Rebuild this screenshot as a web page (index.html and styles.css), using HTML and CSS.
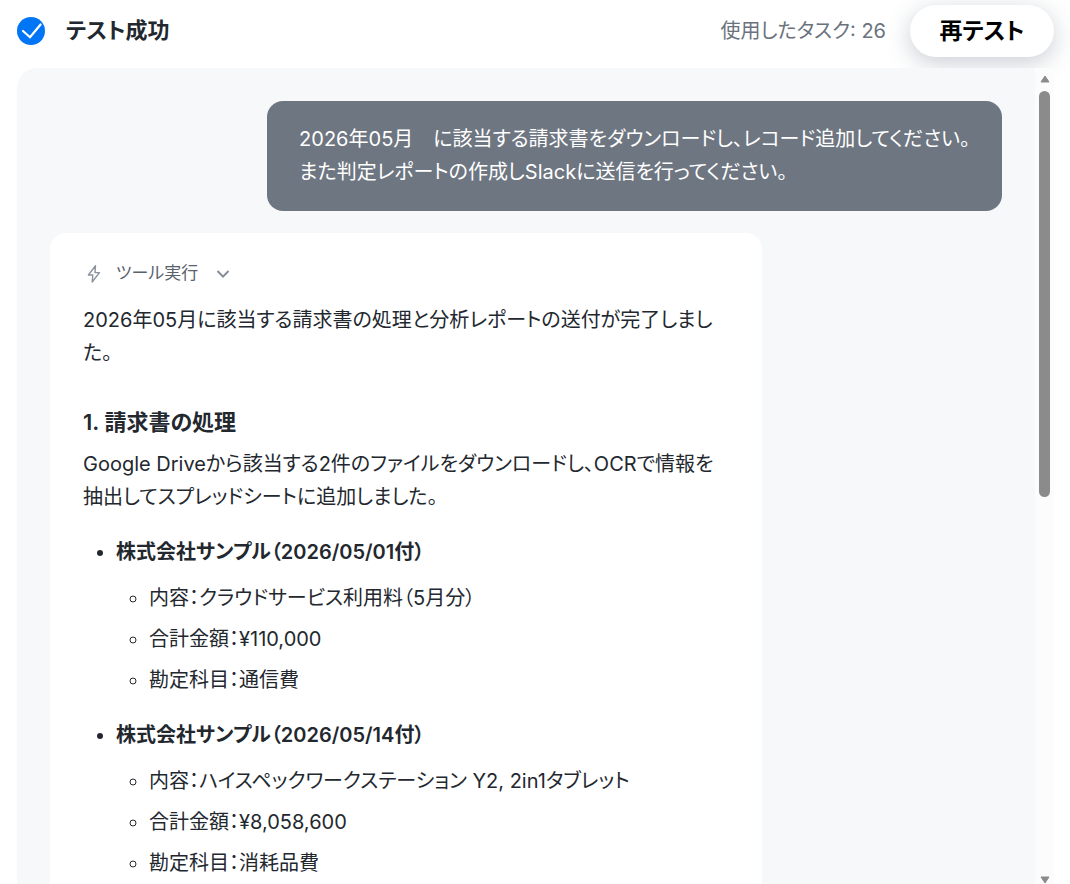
FILE: index.html
```html
<!DOCTYPE html>
<html lang="ja">
<head>
<meta charset="utf-8">
<meta name="viewport" content="width=device-width, initial-scale=1">
<title>テスト成功</title>
<link rel="stylesheet" href="styles.css">
</head>
<body>
<header class="topbar">
  <svg class="status-icon" viewBox="0 0 28 28" aria-hidden="true">
    <circle cx="14" cy="14" r="14" fill="#0075f6"/>
    <path d="M6 14l7 6.2L23.6 7.5" fill="none" stroke="#fff" stroke-width="2.2" stroke-linecap="round"/>
  </svg>
  <h1 class="title">テスト成功</h1>
  <p class="usage">使用したタスク: 26</p>
  <button class="retest" type="button">再テスト</button>
</header>
<main class="panel">
  <div class="thread">
    <div class="message">2026年05月　に該当する請求書をダウンロードし、レコード追加してください。<br>また判定レポートの作成しSlackに送信を行ってください。</div>
    <article class="reply">
      <button class="tool" type="button" aria-expanded="false">
        <svg class="bolt" viewBox="0 0 16 20" aria-hidden="true"><path d="M9.5 1.8L2.4 11h4.4L6.2 18l7.2-9.4H9z" fill="none" stroke="#8b929c" stroke-width="1.4" stroke-linejoin="round"/></svg>
        <span>ツール実行</span>
        <svg class="chevron" viewBox="0 0 14 10" aria-hidden="true"><path d="M1.5 2L7 7.6 12.5 2" fill="none" stroke="#858d98" stroke-width="2"/></svg>
      </button>
      <p class="text">2026年05月に該当する請求書の処理と分析レポートの送付が完了しました。</p>
      <h2 class="heading">1. 請求書の処理</h2>
      <p class="text">Google Driveから該当する2件のファイルをダウンロードし、OCRで情報を抽出してスプレッドシートに追加しました。</p>
      <ul class="invoices">
        <li><strong>株式会社サンプル（2026/05/01付）</strong>
          <ul class="details">
            <li>内容：クラウドサービス利用料（5月分）</li>
            <li>合計金額：¥110,000</li>
            <li>勘定科目：通信費</li>
          </ul>
        </li>
        <li><strong>株式会社サンプル（2026/05/14付）</strong>
          <ul class="details">
            <li>内容：ハイスペックワークステーション Y2, 2in1タブレット</li>
            <li>合計金額：¥8,058,600</li>
            <li>勘定科目：消耗品費</li>
          </ul>
        </li>
      </ul>
    </article>
  </div>
  <div class="scrollbar" aria-hidden="true">
    <svg class="arrow" viewBox="0 0 10 8"><path d="M5 1L9 7H1z" fill="#8b8b8b" stroke="#8b8b8b" stroke-linejoin="round"/></svg>
    <div class="track"><div class="thumb"></div></div>
    <svg class="arrow" viewBox="0 0 10 8"><path d="M5 7L1 1H9z" fill="#8b8b8b" stroke="#8b8b8b" stroke-linejoin="round"/></svg>
  </div>
</main>
</body>
</html>
```
FILE: styles.css
```css
* {
  box-sizing: border-box;
}

body {
  display: flex;
  flex-direction: column;
  height: 100vh;
  margin: 0;
  overflow: hidden;
  background: #fff;
  color: #23282f;
  font-family: Inter, "Noto Sans CJK JP", sans-serif;
  font-feature-settings: "palt";
  font-size: 20px;
  line-height: 33px;
}

h1, h2, p, ul {
  margin: 0;
}

button {
  border: 0;
  padding: 0;
  font-family: inherit;
  font-feature-settings: inherit;
  cursor: pointer;
}

.topbar {
  display: flex;
  flex: none;
  align-items: center;
  padding: 5px 16px 11px 17px;
}

.status-icon {
  flex: none;
  width: 28px;
  height: 28px;
}

.title {
  margin-left: 21px;
  padding-bottom: 2px;
  font-size: 22px;
  font-weight: 600;
}

.usage {
  margin-left: auto;
  color: #6a727d;
}

.retest {
  min-width: 144px;
  height: 52px;
  margin-left: 24px;
  padding-bottom: 4px;
  border-radius: 26px;
  background: #fff;
  box-shadow: 0 6px 24px rgba(60, 80, 100, 0.28);
  color: #000;
  font-size: 23px;
  font-weight: 700;
}

.panel {
  display: flex;
  flex: 1;
  min-height: 0;
  margin: 0 16px 0 17px;
  overflow: hidden;
  border-radius: 20px 0 0 0;
  background: #f6f8fa;
}

.thread {
  display: flex;
  flex: 1;
  flex-direction: column;
  gap: 22px;
  min-width: 0;
  padding: 33px 33px 0;
  overflow: hidden;
}

.message {
  flex: none;
  align-self: flex-end;
  padding: 22px 32px;
  border-radius: 16px;
  background: #6e7681;
  color: #fff;
}

.reply {
  flex: none;
  width: calc(75% - 2px);
  padding: 24px 32px 24px 33px;
  border-radius: 16px 16px 0 0;
  background: #fff;
}

.tool {
  display: flex;
  align-items: center;
  margin-bottom: 14px;
  background: none;
  color: #59616c;
  font-size: 17px;
  line-height: 33px;
}

.bolt {
  width: 16px;
  height: 20px;
  margin: 0 14px 0 3px;
}

.chevron {
  width: 14px;
  height: 10px;
  margin-left: 18px;
}

.heading {
  margin: 36px 0 9px;
  font-size: 22px;
  font-weight: 600;
}

.invoices {
  padding-left: 33px;
  margin-top: 22px;
}

.invoices > li {
  margin-bottom: 22px;
}

.invoices strong {
  font-weight: 600;
}

.details {
  display: flex;
  flex-direction: column;
  gap: 8px;
  margin-top: 13px;
  padding-left: 33px;
}

.scrollbar {
  display: flex;
  flex: none;
  flex-direction: column;
  align-items: center;
  width: 19px;
  padding-top: 7px;
  background: #fcfcfc;
}

.arrow {
  flex: none;
  width: 10px;
  height: 8px;
}

.track {
  flex: 1;
  width: 11px;
  margin: 8px 0;
}

.thumb {
  height: calc(52% + 2px);
  border-radius: 6px;
  background: #8b8b8b;
}
```
